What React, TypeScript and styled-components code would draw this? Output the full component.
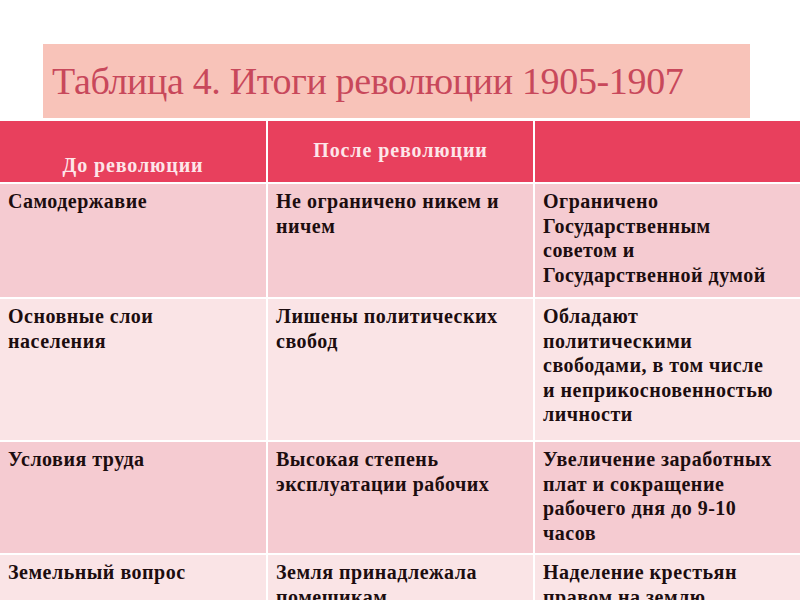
import styled, { createGlobalStyle } from 'styled-components';

const GlobalStyle = createGlobalStyle`
  html, body {
    margin: 0;
    padding: 0;
    background: #ffffff;
  }
  body {
    width: 800px;
    height: 600px;
    overflow: hidden;
    font-family: "Liberation Serif", "Times New Roman", serif;
  }
`;

const Slide = styled.div`
  width: 800px;
  height: 600px;
  padding-top: 44px;
  box-sizing: border-box;
  overflow: hidden;
`;

const TitleBox = styled.div`
  margin-left: 43px;
  width: 707px;
  height: 74px;
  background: #f8c3b9;
  display: flex;
  align-items: center;
  padding-left: 9px;
  box-sizing: border-box;
`;

const Title = styled.h1`
  margin: 0;
  font-size: 38px;
  font-weight: 400;
  color: #c8485b;
  letter-spacing: -0.35px;
`;

const Table = styled.div`
  margin-top: 3px;
  display: grid;
  grid-template-columns: 266px 265px 265px;
  grid-template-rows: 61px 113px 141px 111px 60px;
  gap: 2px;
  background: #ffffff;
`;

const HeadCell = styled.div<{ $align: 'end' | 'start' | 'center' }>`
  background: #e8405d;
  color: #fde6e9;
  font-weight: 700;
  font-size: 20px;
  letter-spacing: 0.9px;
  display: flex;
  justify-content: center;
  align-items: ${p => (p.$align === 'end' ? 'flex-end' : p.$align === 'start' ? 'flex-start' : 'center')};
  padding: 18px 8px 5px;
`;

const Cell = styled.div<{ $dark: boolean }>`
  background: ${p => (p.$dark ? '#f5cbd1' : '#fae4e6')};
  color: #1c0d0f;
  font-weight: 700;
  font-size: 20px;
  line-height: 24.5px;
  letter-spacing: 0.5px;
  padding: 5px 12px 0 8px;
`;

const rows: string[][] = [
  ['Самодержавие', 'Не ограничено никем и ничем', 'Ограничено Государственным советом и Государственной думой'],
  ['Основные слои населения', 'Лишены политических свобод', 'Обладают политическими свободами, в том числе и\u00a0неприкосновенностью личности'],
  ['Условия труда', 'Высокая степень эксплуатации рабочих', 'Увеличение заработных плат и сокращение рабочего дня до 9-10 часов'],
  ['Земельный вопрос', 'Земля принадлежала помещикам', 'Наделение крестьян правом на землю'],
];

export default function App() {
  return (
    <>
      <GlobalStyle />
      <Slide>
        <TitleBox>
          <Title>Таблица 4. Итоги революции 1905-1907</Title>
        </TitleBox>
        <Table>
          <HeadCell $align="end">До революции</HeadCell>
          <HeadCell $align="start">После революции</HeadCell>
          <HeadCell $align="center" />
          {rows.map((row, i) =>
            row.map((text, j) => (
              <Cell key={`${i}-${j}`} $dark={i % 2 === 0}>
                {text}
              </Cell>
            ))
          )}
        </Table>
      </Slide>
    </>
  );
}
